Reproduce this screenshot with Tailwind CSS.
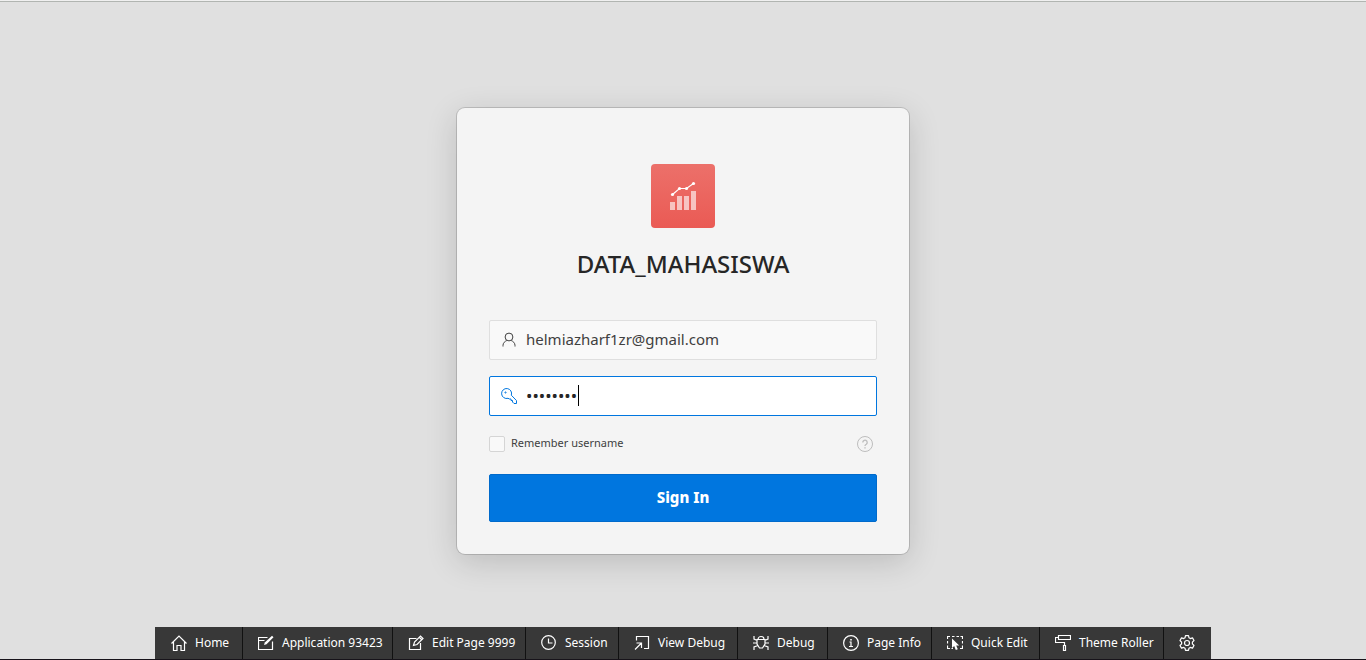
<!DOCTYPE html>
<html lang="en">
<head>
<meta charset="utf-8">
<meta name="viewport" content="width=device-width, initial-scale=1">
<title>DATA_MAHASISWA - Sign In</title>
<script src="https://cdn.jsdelivr.net/npm/@tailwindcss/browser@4"></script>
</head>
<body class="flex min-h-screen flex-col bg-[#e0e0e0] font-['Segoe_UI','Noto_Sans',sans-serif] text-[#262626]">
<div class="h-0.5 border-b border-[#b1b5b1] bg-[#f0f0f0]"></div>
<main class="flex flex-1 flex-col items-center justify-center px-4 pt-8">
  <form class="flex w-full max-w-[452px] flex-col rounded-lg bg-[#f4f4f4] px-8 pt-14 pb-8 shadow-[0_0_0_1px_rgba(0,0,0,0.15),0_8px_32px_rgba(0,0,0,0.16)]">
    <div class="flex size-16 items-center justify-center self-center rounded bg-linear-to-b from-[#ec706a] to-[#ea5a54]">
      <svg class="size-8" viewBox="0 0 32 32" aria-hidden="true">
        <g fill="#fff" fill-opacity=".62"><path d="M3 22h5v8H3zM10 16h5v14h-5zM17 16h5v14h-5zM24 11h5v19h-5z"/></g>
        <path d="M5.500 14.500 12.500 8.500h7L26.500 3.500" fill="none" stroke="#fff" stroke-width="1.200"/>
        <g fill="#fff"><circle cx="5.500" cy="14.500" r="1.600"/><circle cx="12.500" cy="8.500" r="1.600"/><circle cx="19.500" cy="8.500" r="1.600"/><circle cx="26.500" cy="3.500" r="1.600"/></g>
      </svg>
    </div>
    <h1 class="mt-5 text-center text-2xl leading-8 font-medium">DATA_MAHASISWA</h1>
    <label class="mt-10 flex h-10 items-center rounded-xs border border-[#dfdfdf] bg-[#f9f9f9] pl-[11px] text-[#404040]">
      <svg class="size-4 shrink-0" viewBox="0 0 16 16" fill="none" stroke="currentColor" aria-hidden="true"><circle cx="8" cy="5" r="3.900"/><path d="M2 14.500v-1.200C2 11 4 9.200 5.700 8.600M14 14.500v-1.200C14 11 12 9.200 10.300 8.600"/></svg>
      <input class="ml-[9px] min-w-0 flex-1 bg-transparent text-[15px] outline-none" type="text" value="helmiazharf1zr@gmail.com" aria-label="Username">
    </label>
    <label class="relative mt-4 flex h-10 items-center rounded-xs border border-[#0076df] bg-white pl-[11px] text-[#0076df]">
      <svg class="size-4 shrink-0" viewBox="0 0 16 16" fill="none" stroke="currentColor" aria-hidden="true"><path d="M10.300 7.200A5 5 0 1 0 7 10.300l1.500.7h1.500v1.500h1.500V14l1.500 1.500h2.500V12.600z"/><circle cx="4.500" cy="4.500" r=".6"/></svg>
      <input class="ml-[9px] min-w-0 flex-1 bg-transparent text-[17px] text-[#262626] caret-transparent outline-none" type="password" value="password" aria-label="Password">
      <span class="absolute top-2 left-[88px] h-[21px] w-px bg-black"></span>
    </label>
    <div class="mt-5 flex h-4 items-center text-[#404040]">
      <input id="remember" type="checkbox" class="size-4 appearance-none rounded-xs border border-[#d5d5d5] bg-[#f9f9f9]">
      <label for="remember" class="ml-1.5 text-[11px]">Remember username</label>
      <button type="button" class="mr-1 ml-auto text-[#bdbdbd]" aria-label="Help">
        <svg class="size-4" viewBox="0 0 16 16" fill="none" stroke="currentColor"><circle cx="8" cy="8" r="7.500"/><path d="M5.800 6.500a2.200 2.200 0 1 1 3.500 1.700C8.500 8.700 8 9 8 10" stroke-width="1.300"/><path d="M8 11.200v1.300" stroke-width="1.400"/></svg>
      </button>
    </div>
    <button type="button" class="mt-[22px] h-12 rounded-xs border border-[#006acb] bg-[#0076df] text-[15px] font-extrabold text-white">Sign In</button>
  </form>
</main>
<nav aria-label="Developer toolbar" class="flex justify-center border-b border-[#17131a] text-[12px] text-white">
  <div class="flex h-8 divide-x divide-[#111] bg-[#383838]">
    <button class="flex w-[88px] items-center gap-2 pl-4 whitespace-nowrap"><svg class="size-4 shrink-0" viewBox="0 0 16 16" fill="none" stroke="currentColor" stroke-width="1.200"><path d="M.5 8.500 8 1l7.500 7.500M2.500 7v8.500h3.500v-5h4v5h3.500V7"/></svg>Home</button>
    <button class="flex w-[150px] items-center gap-2 pl-[15px] whitespace-nowrap"><svg class="size-4 shrink-0" viewBox="0 0 16 16" fill="none" stroke="currentColor" stroke-width="1.200"><path d="M9.500 2.500h-9v12h14V6.500M.5 5.500h6"/><path d="m6 10 .8-2.500L14 .8l1.500 1.500L8.500 9.200z" fill="currentColor" stroke="none"/></svg>Application 93423</button>
    <button class="flex w-[133px] items-center gap-2 pl-[15px] whitespace-nowrap"><svg class="size-4 shrink-0" viewBox="0 0 16 16" fill="none" stroke="currentColor" stroke-width="1.200"><path d="M8.500 3.500H1.500v11h11V8M5.500 10.500l1-3.500 6-6L15 3.500l-6 6zM11.500 2.500 13.500 4.500"/></svg>Edit Page 9999</button>
    <button class="flex w-[93px] items-center gap-2 pl-[15px] whitespace-nowrap"><svg class="size-4 shrink-0" viewBox="0 0 16 16" fill="none" stroke="currentColor" stroke-width="1.200"><circle cx="7.500" cy="7.500" r="6.800"/><path d="M7.500 3.500v4.500h4"/></svg>Session</button>
    <button class="flex w-[119px] items-center gap-2 pl-[15px] whitespace-nowrap"><svg class="size-4 shrink-0" viewBox="0 0 16 16" fill="none" stroke="currentColor" stroke-width="1.200"><path d="M2.500 5.500v-4h12v12H10M1 14.500l6.500-6.500M2.500 8h5v5"/></svg>View Debug</button>
    <button class="flex w-[90px] items-center gap-2 pl-[15px] whitespace-nowrap"><svg class="size-4 shrink-0" viewBox="0 0 16 16" fill="none" stroke="currentColor" stroke-width="1.200"><path d="M4 4.500h8v4.500l-2.500 4h-3L4 9zM5 4.500a3 3 0 0 1 6 0M0 8h4M12 8h4M4.300 5.500 1 4V1M11.700 5.500 15 4V1M5 10.500 1 12v3M11 10.500l4 1.500v3"/></svg>Debug</button>
    <button class="flex w-[104px] items-center gap-2 pl-[15px] whitespace-nowrap"><svg class="size-4 shrink-0" viewBox="0 0 16 16" fill="none" stroke="currentColor" stroke-width="1.200"><circle cx="8" cy="8" r="7.400"/><path d="M6.500 7H8v4.500M6 11.500h4"/><path d="M7.200 4h1.600v1.500H7.200z" fill="currentColor" stroke="none"/></svg>Page Info</button>
    <button class="flex w-[108px] items-center gap-2 pl-[15px] whitespace-nowrap"><svg class="size-4 shrink-0" viewBox="0 0 16 16" fill="none" stroke="currentColor" stroke-width="1.200"><path d="M.5 4V1.500H3M5 1.500h2.500M9.500 1.500H12M13.500 1.500h2V4M15.500 6v2.500M15.500 10.500v3H13M.5 6v2.500M.5 10.500v3H3M4.500 13.500h1.500"/><path d="M5 3.500v9.500l2.200-2 1.600 4 2-.8-1.600-3.800h3z" fill="currentColor" stroke="none"/></svg>Quick Edit</button>
    <button class="flex w-[124px] items-center gap-2 pl-[15px] whitespace-nowrap"><svg class="size-4 shrink-0" viewBox="0 0 16 16" fill="none" stroke="currentColor" stroke-width="1.200"><path d="M3.500.5h12v4h-12zM3.500 2.500h-3V7.500h9V10M8.500 10.500h2v5h-2z"/></svg>Theme Roller</button>
    <button class="flex w-[47px] items-center pl-[15px]" aria-label="Settings"><svg class="size-4 shrink-0" viewBox="0 0 16 16" fill="none" stroke="currentColor" stroke-width="1.200" stroke-linejoin="round"><path d="M6.500.6h3l.5 2.200 1.300.8 2.200-.7L15 5.500 13.400 7.100v1.800L15 10.500l-1.500 2.600-2.200-.7-1.300.8-.5 2.200h-3L6 13.200l-1.300-.8-2.200.7L1 10.500l1.600-1.600V7.100L1 5.500l1.500-2.600 2.200.7L6 2.800z"/><circle cx="8" cy="8" r="2.500"/></svg></button>
  </div>
</nav>
</body>
</html>
